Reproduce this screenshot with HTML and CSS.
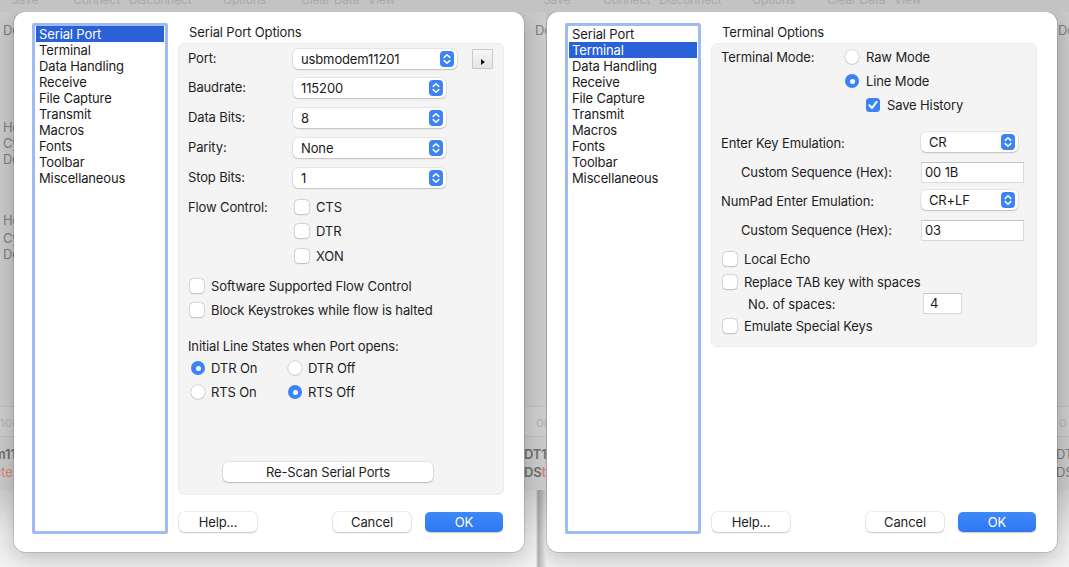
FILE: index.html
```html
<!DOCTYPE html>
<html>
<head>
<meta charset="utf-8">
<title>Options</title>
<link rel="stylesheet" href="styles.css">
</head>
<body>
<div class="screen">

  <div class="bg-toolbar">
    <span class="tb w62">Save</span>
    <span class="tb w56">Connect</span>
    <span class="tb w94">Disconnect</span>
    <span class="tb w78">Options</span>
    <span class="tb w67">Clear Data</span>
    <span class="tb w175">View</span>
    <span class="tb w60">Save</span>
    <span class="tb w56">Connect</span>
    <span class="tb w93">Disconnect</span>
    <span class="tb w75">Options</span>
    <span class="tb w67">Clear Data</span>
    <span class="tb">View</span>
  </div>

  <div class="desk-row">

  <section class="half half-left">
    <div class="bg">
      <div class="bg-window">
        <div class="bg-top">
          <div class="bg-col">
            <span class="bg-t m-de">De</span>
            <span class="bg-t m-ho">Ho</span>
            <span class="bg-t">Cy</span>
            <span class="bg-t">De</span>
            <span class="bg-t m-ho2">Ho</span>
            <span class="bg-t m-cy2">Cy</span>
            <span class="bg-t">De</span>
          </div>
          <div class="bg-col bg-col-right">
            <span class="bg-t m-de">De</span>
          </div>
        </div>
        <div class="bg-head"><span class="bg-faint">nor</span><span class="bg-faint">or</span></div>
        <div class="bg-rows">
          <div class="bg-row"><span class="bg-dark">m11</span><span class="bg-dark">DT11</span></div>
          <div class="bg-row"><span class="bg-red">cte</span><span class="bg-dark">DS<span class="bg-red">te</span></span></div>
        </div>
      </div>
      <div class="bg-desk"></div>
    </div>

    <div class="dialog">
      <ul class="sidebar">
        <li class="sel">Serial Port</li>
        <li>Terminal</li>
        <li>Data Handling</li>
        <li>Receive</li>
        <li>File Capture</li>
        <li>Transmit</li>
        <li>Macros</li>
        <li>Fonts</li>
        <li>Toolbar</li>
        <li>Miscellaneous</li>
      </ul>
      <div class="main">
        <div class="title">Serial Port Options</div>
        <div class="panel panel-grow">
          <div class="frow frow-first">
            <span class="flabel">Port:</span>
            <div class="popup popup-port"><span class="ptext">usbmodem11201</span><svg class="stepper" viewBox="0 0 14 16"><rect x="0" y="0" width="14" height="16" rx="4" fill="#3b83f6"/><path d="M4.2 6.4 L7 3.7 L9.8 6.4 M4.2 9.6 L7 12.3 L9.8 9.6" fill="none" stroke="#fff" stroke-width="1.5" stroke-linecap="round" stroke-linejoin="round"/></svg></div>
            <button class="tri-btn"><svg viewBox="0 0 21 20" width="21" height="20"><path d="M9 10 L13 13 L9 16 Z" fill="#111"/></svg></button>
          </div>
          <div class="frow">
            <span class="flabel">Baudrate:</span>
            <div class="popup"><span class="ptext">115200</span><svg class="stepper" viewBox="0 0 14 16"><rect x="0" y="0" width="14" height="16" rx="4" fill="#3b83f6"/><path d="M4.2 6.4 L7 3.7 L9.8 6.4 M4.2 9.6 L7 12.3 L9.8 9.6" fill="none" stroke="#fff" stroke-width="1.5" stroke-linecap="round" stroke-linejoin="round"/></svg></div>
          </div>
          <div class="frow">
            <span class="flabel">Data Bits:</span>
            <div class="popup"><span class="ptext">8</span><svg class="stepper" viewBox="0 0 14 16"><rect x="0" y="0" width="14" height="16" rx="4" fill="#3b83f6"/><path d="M4.2 6.4 L7 3.7 L9.8 6.4 M4.2 9.6 L7 12.3 L9.8 9.6" fill="none" stroke="#fff" stroke-width="1.5" stroke-linecap="round" stroke-linejoin="round"/></svg></div>
          </div>
          <div class="frow">
            <span class="flabel">Parity:</span>
            <div class="popup"><span class="ptext">None</span><svg class="stepper" viewBox="0 0 14 16"><rect x="0" y="0" width="14" height="16" rx="4" fill="#3b83f6"/><path d="M4.2 6.4 L7 3.7 L9.8 6.4 M4.2 9.6 L7 12.3 L9.8 9.6" fill="none" stroke="#fff" stroke-width="1.5" stroke-linecap="round" stroke-linejoin="round"/></svg></div>
          </div>
          <div class="frow">
            <span class="flabel">Stop Bits:</span>
            <div class="popup"><span class="ptext">1</span><svg class="stepper" viewBox="0 0 14 16"><rect x="0" y="0" width="14" height="16" rx="4" fill="#3b83f6"/><path d="M4.2 6.4 L7 3.7 L9.8 6.4 M4.2 9.6 L7 12.3 L9.8 9.6" fill="none" stroke="#fff" stroke-width="1.5" stroke-linecap="round" stroke-linejoin="round"/></svg></div>
          </div>

          <div class="flow">
            <span class="flabel flow-label">Flow Control:</span>
            <div class="flow-opts">
              <label class="chk-row"><span class="box"></span>CTS</label>
              <label class="chk-row"><span class="box"></span>DTR</label>
              <label class="chk-row"><span class="box"></span>XON</label>
            </div>
          </div>

          <div class="opts">
            <label class="chk-row"><span class="box"></span>Software Supported Flow Control</label>
            <label class="chk-row"><span class="box"></span>Block Keystrokes while flow is halted</label>
          </div>

          <div class="lines-title">Initial Line States when Port opens:</div>
          <div class="radio-grid">
            <label class="rad-row"><span class="radio on"></span>DTR On</label>
            <label class="rad-row"><span class="radio"></span>DTR Off</label>
            <label class="rad-row"><span class="radio"></span>RTS On</label>
            <label class="rad-row"><span class="radio on"></span>RTS Off</label>
          </div>

          <button class="btn rescan">Re-Scan Serial Ports</button>
        </div>
        <div class="buttons">
          <button class="btn">Help...</button>
          <span class="spacer"></span>
          <button class="btn">Cancel</button>
          <button class="btn btn-ok">OK</button>
        </div>
      </div>
    </div>
  </section>

  <section class="half half-right">
    <div class="bg">
      <div class="bg-window">
        <div class="bg-top">
          <div class="bg-col"></div>
          <div class="bg-col bg-col-right">
            <span class="bg-t m-de">De</span>
          </div>
        </div>
        <div class="bg-head"><span></span><span class="bg-faint">o</span></div>
        <div class="bg-rows">
          <div class="bg-row"><span></span><span class="bg-grey">DT</span></div>
          <div class="bg-row"><span></span><span class="bg-grey">DS</span></div>
        </div>
      </div>
      <div class="bg-desk"></div>
    </div>

    <div class="dialog">
      <ul class="sidebar">
        <li>Serial Port</li>
        <li class="sel">Terminal</li>
        <li>Data Handling</li>
        <li>Receive</li>
        <li>File Capture</li>
        <li>Transmit</li>
        <li>Macros</li>
        <li>Fonts</li>
        <li>Toolbar</li>
        <li>Miscellaneous</li>
      </ul>
      <div class="main">
        <div class="title">Terminal Options</div>
        <div class="panel panel-term">
          <div class="mode">
            <span class="flabel mode-label">Terminal Mode:</span>
            <div class="mode-opts">
              <label class="rad-row"><span class="radio"></span>Raw Mode</label>
              <label class="rad-row"><span class="radio on"></span>Line Mode</label>
              <label class="chk-row save-hist"><span class="box on"><svg viewBox="0 0 14 14"><path d="M3.4 7.3 L6 10 L10.6 3.8" fill="none" stroke="#fff" stroke-width="2" stroke-linecap="round" stroke-linejoin="round"/></svg></span>Save History</label>
            </div>
          </div>

          <div class="trow trow-enter">
            <span class="tlabel">Enter Key Emulation:</span>
            <div class="popup popup-small"><span class="ptext">CR</span><svg class="stepper" viewBox="0 0 14 16"><rect x="0" y="0" width="14" height="16" rx="4" fill="#3b83f6"/><path d="M4.2 6.4 L7 3.7 L9.8 6.4 M4.2 9.6 L7 12.3 L9.8 9.6" fill="none" stroke="#fff" stroke-width="1.5" stroke-linecap="round" stroke-linejoin="round"/></svg></div>
          </div>
          <div class="trow trow-seq">
            <span class="tlabel indent">Custom Sequence (Hex):</span>
            <div class="field field-hex">00 1B</div>
          </div>
          <div class="trow trow-numpad">
            <span class="tlabel">NumPad Enter Emulation:</span>
            <div class="popup popup-small"><span class="ptext">CR+LF</span><svg class="stepper" viewBox="0 0 14 16"><rect x="0" y="0" width="14" height="16" rx="4" fill="#3b83f6"/><path d="M4.2 6.4 L7 3.7 L9.8 6.4 M4.2 9.6 L7 12.3 L9.8 9.6" fill="none" stroke="#fff" stroke-width="1.5" stroke-linecap="round" stroke-linejoin="round"/></svg></div>
          </div>
          <div class="trow trow-seq trow-seq2">
            <span class="tlabel indent">Custom Sequence (Hex):</span>
            <div class="field field-hex">03</div>
          </div>

          <div class="term-checks">
            <label class="chk-row"><span class="box"></span>Local Echo</label>
            <label class="chk-row"><span class="box"></span>Replace TAB key with spaces</label>
            <div class="spaces-row">
              <span class="spaces-label">No. of spaces:</span>
              <div class="field field-spaces">4</div>
            </div>
            <label class="chk-row"><span class="box"></span>Emulate Special Keys</label>
          </div>
        </div>
        <div class="buttons">
          <button class="btn">Help...</button>
          <span class="spacer"></span>
          <button class="btn">Cancel</button>
          <button class="btn btn-ok">OK</button>
        </div>
      </div>
    </div>
  </section>

  </div>
</div>
</body>
</html>
```

FILE: styles.css
```css
* { box-sizing: border-box; }

html, body {
  margin: 0;
  padding: 0;
}

body {
  width: 1069px;
  height: 567px;
  overflow: hidden;
  font-family: Inter, "Liberation Sans", Arial, sans-serif;
  font-size: 13px;
  letter-spacing: -0.13px;
  color: #1e1e1e;
  background: #e4e4e4;
}

.screen {
  display: flex;
  flex-direction: column;
  width: 1069px;
  height: 567px;
}

/* ---------- background application ---------- */
.bg-toolbar {
  height: 12px;
  background: #c3c3c3;
  overflow: hidden;
  display: flex;
  flex: none;
  padding-left: 11px;
}

.tb {
  display: block;
  flex: none;
  margin-top: -8px;
  line-height: 15px;
  font-size: 12px;
  color: #a9a9a9;
  white-space: nowrap;
}
.w62 { width: 62px; }
.w56 { width: 56px; }
.w94 { width: 94px; }
.w93 { width: 93px; }
.w78 { width: 78px; }
.w75 { width: 75px; }
.w67 { width: 67px; }
.w60 { width: 60px; }
.w175 { width: 175px; }

.desk-row {
  display: flex;
  flex: 1;
}

.half {
  position: relative;
  height: 555px;
  overflow: hidden;
  flex: none;
}
.half-left { width: 546px; }
.half-right { width: 523px; }

.bg {
  display: flex;
  flex-direction: column;
  height: 100%;
}

.bg-window {
  height: 478px;
  background: #cacaca;
  display: flex;
  flex-direction: column;
  flex: none;
}

.bg-top {
  height: 395px;
  display: flex;
  justify-content: space-between;
  border-bottom: 1px solid #bdbdbd;
}

.bg-col {
  display: flex;
  flex-direction: column;
  padding-left: 3px;
}
.bg-col-right { width: 11px; padding-left: 0; overflow: hidden; }

.bg-t {
  line-height: 16px;
  color: #7e7e7e;
  white-space: nowrap;
}
.m-de { margin-top: 10px; }
.m-ho { margin-top: 81px; }
.m-ho2 { margin-top: 45px; }
.m-cy2 { margin-top: 2px; }

.bg-head {
  height: 30px;
  display: flex;
  justify-content: space-between;
  align-items: center;
  border-bottom: 1px solid #bebebe;
  background: #cdcdcd;
}

.bg-faint {
  color: #b3b3b3;
  margin-left: -3px;
  white-space: nowrap;
}
.bg-faint + .bg-faint,
.half-right .bg-faint { margin-left: 0; margin-right: -2px; width: 12px; overflow: hidden; }

.bg-rows {
  padding-top: 8px;
  display: flex;
  flex-direction: column;
}

.bg-row {
  display: flex;
  justify-content: space-between;
  line-height: 18px;
}
.bg-dark { color: #6f6f6f; font-weight: 600; white-space: nowrap; }
.bg-grey { color: #7a7a7a; white-space: nowrap; }
.bg-red { color: #d9826f; white-space: nowrap; }
.bg-row > span:first-child { margin-left: -6px; }
.bg-row > span:last-child { width: 22px; overflow: hidden; }
.half-right .bg-row > span:last-child { width: 13px; }

.bg-desk {
  flex: 1;
  background:
    linear-gradient(to right, rgba(0,0,0,0) 536px, rgba(0,0,0,0.28) 538px, rgba(0,0,0,0.05) 546px),
    linear-gradient(#cfcfcf, #eeeeee 60%, #f3f3f3);
}
.half-right .bg-desk {
  background: linear-gradient(#cfcfcf, #eeeeee 60%, #f3f3f3);
}

/* ---------- dialog ---------- */
.dialog {
  position: absolute;
  top: 0;
  left: 14px;
  width: 510px;
  height: 540px;
  background: #ffffff;
  border-radius: 11px;
  box-shadow: 0 0 0 0.5px rgba(0, 0, 0, 0.22), 0 6px 22px rgba(0, 0, 0, 0.22);
  display: flex;
  gap: 10px;
  padding: 11px 20px 18px 18px;
}
.half-right .dialog { left: 1px; }

.sidebar {
  list-style: none;
  margin: 0;
  width: 136px;
  flex: none;
  border: 3px solid #9fbbf4;
  border-radius: 2px;
  padding: 0 1px 1px;
  background: #fff;
}
.sidebar li {
  height: 16px;
  line-height: 16px;
  padding-left: 3px;
  color: #1a1a1a;
  white-space: nowrap;
}
.sidebar li.sel {
  background: #2a60d8;
  color: #fff;
}

.main {
  flex: 1;
  display: flex;
  flex-direction: column;
  min-width: 0;
}

.title {
  height: 20px;
  line-height: 18px;
  padding-left: 11px;
}

.panel {
  background: #f4f4f4;
  border: 1px solid #ececec;
  border-radius: 6px;
  display: flex;
  flex-direction: column;
}
.panel-grow {
  flex: 1;
  padding: 4px 10px 12px 9px;
  margin-bottom: 17px;
}

/* form rows (serial) */
.frow {
  display: flex;
  align-items: center;
  height: 20px;
}
.frow + .frow { margin-top: 10px; }
.frow-first + .frow { margin-top: 9px; }

.flabel {
  width: 105px;
  flex: none;
  line-height: 16px;
}

.popup {
  width: 153px;
  height: 20px;
  background: #fff;
  border-radius: 5px;
  box-shadow: 0 0 0 0.5px rgba(0, 0, 0, 0.12), 0 1px 1.5px rgba(0, 0, 0, 0.16);
  display: flex;
  align-items: center;
  justify-content: space-between;
  padding: 0 3px 0 8px;
  margin-top: 2px;
}
.popup-port { width: 164px; }
.ptext { line-height: 16px; color: #1a1a1a; }
.stepper { width: 14px; height: 16px; display: block; }

.tri-btn {
  width: 21px;
  height: 20px;
  margin-left: 15px;
  margin-top: 2px;
  padding: 0;
  border: 1px solid #c9c9c9;
  border-radius: 1px;
  background: linear-gradient(#f7f7f7, #e4e4e4);
  display: block;
}
.tri-btn svg { display: block; margin: -1px; }

.flow {
  display: flex;
  margin-top: 8px;
}
.flow-label { margin-top: 4px; }
.flow-opts {
  display: flex;
  flex-direction: column;
  margin-left: 2px;
}
.flow-opts .chk-row:last-child { margin-top: 1px; }

.chk-row, .rad-row {
  display: flex;
  align-items: center;
  height: 24px;
  gap: 7px;
  white-space: nowrap;
}

.box {
  width: 14px;
  height: 14px;
  flex: none;
  background: #fff;
  border-radius: 3.5px;
  box-shadow: 0 0 0 0.5px rgba(0, 0, 0, 0.2), 0 0.5px 1.5px rgba(0, 0, 0, 0.15);
}
.box.on {
  background: #3b83f6;
  box-shadow: none;
}
.box svg { display: block; width: 14px; height: 14px; }

.radio {
  width: 14px;
  height: 14px;
  flex: none;
  border-radius: 50%;
  background: #fff;
  box-shadow: 0 0 0 0.5px rgba(0, 0, 0, 0.2), 0 0.5px 1.5px rgba(0, 0, 0, 0.15);
  display: flex;
  align-items: center;
  justify-content: center;
}
.radio.on {
  background: #3b83f6;
  box-shadow: none;
}
.radio.on::after {
  content: "";
  width: 5px;
  height: 5px;
  border-radius: 50%;
  background: #fff;
}

.opts {
  display: flex;
  flex-direction: column;
  margin-top: 6px;
  margin-left: 2px;
}

.lines-title {
  margin-top: 16px;
  line-height: 16px;
}

.radio-grid {
  display: grid;
  grid-template-columns: 97px auto;
  margin-top: 2px;
  margin-left: 3px;
}
.radio-grid .rad-row { gap: 6px; }

.btn {
  font-family: inherit;
  font-size: 13px;
  letter-spacing: inherit;
  color: #1e1e1e;
  height: 20px;
  padding: 0;
  border: none;
  border-radius: 5px;
  background: #fff;
  box-shadow: 0 0 0 0.5px rgba(0, 0, 0, 0.14), 0 1px 1.5px rgba(0, 0, 0, 0.16);
  line-height: 20px;
  text-align: center;
}

.rescan {
  width: 210px;
  margin: auto auto 0 35px;
}

.buttons {
  display: flex;
  height: 20px;
  margin-top: auto;
  margin-bottom: 2px;
  padding: 0 1px;
}
.buttons .btn { width: 78px; }
.buttons .spacer { flex: 1; }
.buttons .btn-ok { margin-left: 14px; width: 78px; }

.btn-ok {
  background: linear-gradient(#3d89f8, #2f77f1);
  color: #fff;
  box-shadow: 0 0.5px 1px rgba(0, 0, 0, 0.2);
}

/* ---------- terminal panel ---------- */
.panel-term {
  padding: 1px 10px 9px 9px;
}

.mode {
  display: flex;
}
.mode-label {
  width: 124px;
  margin-top: 4px;
}
.mode-opts {
  display: flex;
  flex-direction: column;
}
.mode-opts .rad-row { gap: 7px; }
.save-hist { margin-left: 21px; }

.trow {
  display: flex;
  align-items: center;
  height: 20px;
}
.trow-enter { margin-top: 15px; }
.trow-seq { margin-top: 10px; }
.trow-numpad { margin-top: 8px; }
.trow-seq2 { margin-top: 10px; }

.tlabel {
  width: 200px;
  flex: none;
  line-height: 16px;
  margin-top: 1px;
}
.tlabel.indent { padding-left: 20px; margin-top: -1px; }

.popup-small {
  width: 97px;
  margin-top: 0;
}

.field {
  height: 21px;
  background: #fff;
  border: 1px solid #d9d9d9;
  border-top-color: #c4c4c4;
  line-height: 19px;
  padding-left: 3px;
  color: #1a1a1a;
}
.field-hex { width: 103px; }

.term-checks {
  display: flex;
  flex-direction: column;
  margin-top: 7px;
  margin-left: 2px;
}
.term-checks .chk-row { height: 23px; }

.spaces-row {
  display: flex;
  align-items: center;
  height: 21px;
}
.spaces-label {
  width: 200px;
  padding-left: 25px;
  line-height: 16px;
}
.field-spaces {
  width: 39px;
  padding-left: 6px;
}
```
